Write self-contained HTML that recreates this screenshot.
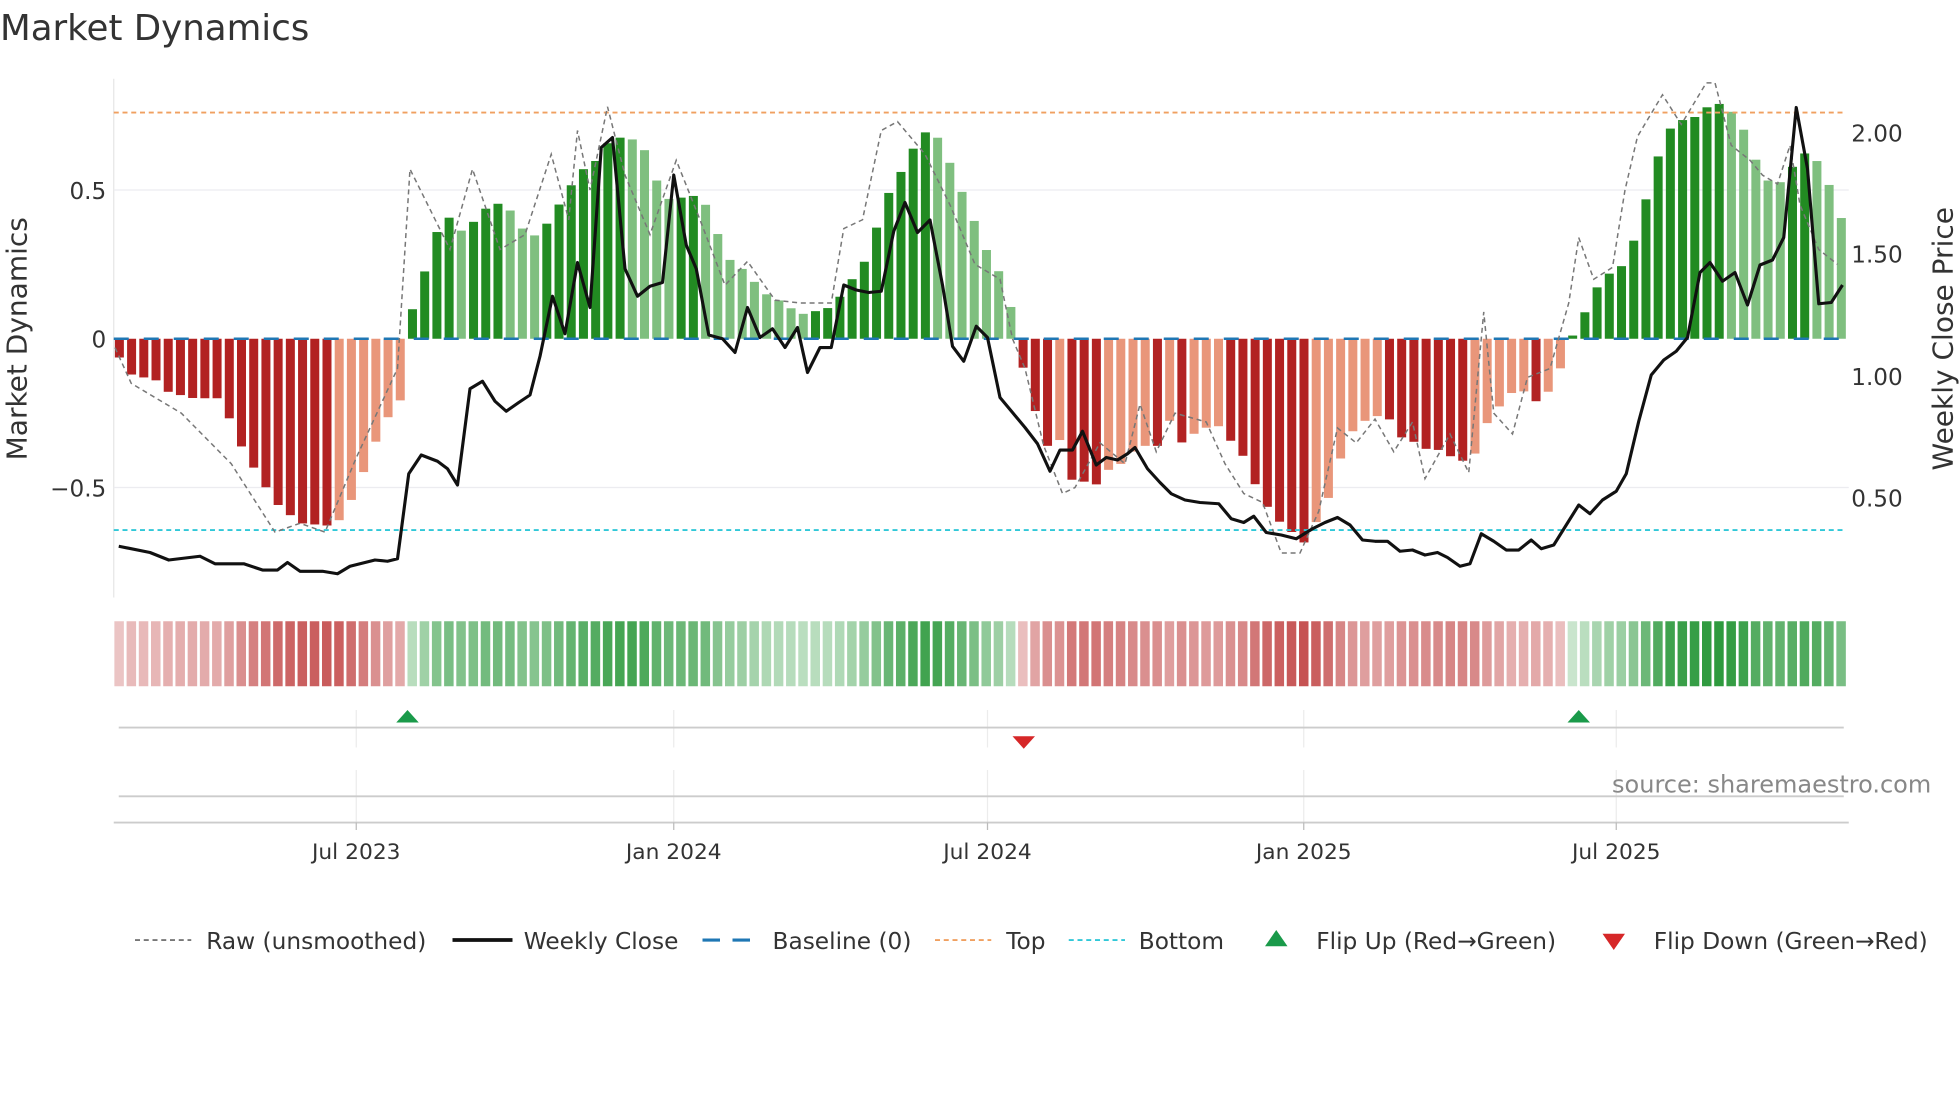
<!DOCTYPE html>
<html><head><meta charset="utf-8">
<style>
html,body{margin:0;padding:0;background:#fff;width:1960px;height:1102px;overflow:hidden}
#w{width:1568px;height:882px;transform:scale(1.25);transform-origin:0 0;position:absolute;left:0;top:0}
svg text{font-family:"DejaVu Sans","Liberation Sans",sans-serif;fill:#333}
</style></head><body>
<div id="w">
<svg id="s" width="1568" height="882" viewBox="0 0 1568 882" xmlns="http://www.w3.org/2000/svg">
<text x="0" y="32" font-size="28.5" fill="#333">Market Dynamics</text>
<line x1="91" y1="63" x2="91" y2="478" stroke="#e6e6e6"/>
<line x1="91" y1="152" x2="1479" y2="152" stroke="#ececf0"/>
<line x1="91" y1="390" x2="1479" y2="390" stroke="#ececf0"/>
<g id="bars"></g>
<line x1="91" y1="271" x2="1479" y2="271" stroke="#1f77b4" stroke-width="2" stroke-dasharray="12,12"/>
<line x1="91" y1="90" x2="1475" y2="90" stroke="#f0a060" stroke-width="1.5" stroke-dasharray="4,3"/>
<line x1="91" y1="424" x2="1475" y2="424" stroke="#30c8d8" stroke-width="1.5" stroke-dasharray="4,3"/>
<polyline id="raw" fill="none" stroke="#777" stroke-width="1.2" stroke-dasharray="4,3"/>
<polyline id="price" fill="none" stroke="#111" stroke-width="2.5" stroke-linejoin="round"/>
<g font-size="18.5" text-anchor="end">
<text x="85" y="159">0.5</text><text x="85" y="278">0</text><text x="85" y="397">−0.5</text>
</g>
<g font-size="18.5">
<text x="1481" y="113">2.00</text><text x="1481" y="210">1.50</text><text x="1481" y="308">1.00</text><text x="1481" y="405">0.50</text>
</g>
<text transform="translate(21,271) rotate(-90)" font-size="22.4" text-anchor="middle">Market Dynamics</text>
<text transform="translate(1562,271) rotate(-90)" font-size="22.4" text-anchor="middle">Weekly Close Price</text>
<g id="strip"></g>
<g stroke="#ececec">
<line x1="285" y1="568" x2="285" y2="598"/><line x1="539" y1="568" x2="539" y2="598"/><line x1="790" y1="568" x2="790" y2="598"/><line x1="1043" y1="568" x2="1043" y2="598"/><line x1="1293" y1="568" x2="1293" y2="598"/>
<line x1="285" y1="616" x2="285" y2="658"/><line x1="539" y1="616" x2="539" y2="658"/><line x1="790" y1="616" x2="790" y2="658"/><line x1="1043" y1="616" x2="1043" y2="658"/><line x1="1293" y1="616" x2="1293" y2="658"/>
</g>
<line x1="95" y1="582" x2="1475" y2="582" stroke="#ccc" stroke-width="1.5"/>
<line x1="95" y1="637" x2="1475" y2="637" stroke="#ccc" stroke-width="1.5"/>
<line x1="91" y1="658" x2="1479" y2="658" stroke="#ccc" stroke-width="1.5"/>
<polygon points="326,568 317,578 335,578" fill="#1a9a4a"/>
<polygon points="1263,568 1254,578 1272,578" fill="#1a9a4a"/>
<polygon points="810,589 828,589 819,599" fill="#d62728"/>
<text x="1545" y="634" font-size="19.2" text-anchor="end" style="fill:#888">source: sharemaestro.com</text>
<g stroke="#bbb"><line x1="285" y1="658" x2="285" y2="664"/><line x1="539" y1="658" x2="539" y2="664"/><line x1="790" y1="658" x2="790" y2="664"/><line x1="1043" y1="658" x2="1043" y2="664"/><line x1="1293" y1="658" x2="1293" y2="664"/></g>
<g font-size="17.4" text-anchor="middle">
<text x="285" y="687">Jul 2023</text><text x="539" y="687">Jan 2024</text><text x="790" y="687">Jul 2024</text><text x="1043" y="687">Jan 2025</text><text x="1293" y="687">Jul 2025</text>
</g>
<g font-size="18.6">
<line x1="108" y1="752" x2="153" y2="752" stroke="#777" stroke-width="1.5" stroke-dasharray="4,3"/>
<text x="165" y="759">Raw (unsmoothed)</text>
<line x1="362" y1="752" x2="410" y2="752" stroke="#111" stroke-width="3"/>
<text x="419" y="759">Weekly Close</text>
<line x1="562" y1="752" x2="607" y2="752" stroke="#1f77b4" stroke-width="2.5" stroke-dasharray="14,10"/>
<text x="618" y="759">Baseline (0)</text>
<line x1="748" y1="752" x2="793" y2="752" stroke="#f0a060" stroke-width="1.5" stroke-dasharray="4,3"/>
<text x="805" y="759">Top</text>
<line x1="855" y1="752" x2="900" y2="752" stroke="#30c8d8" stroke-width="1.5" stroke-dasharray="4,3"/>
<text x="911" y="759">Bottom</text>
<polygon points="1021,744 1012,757 1030,757" fill="#1a9a4a"/>
<text x="1053" y="759">Flip Up (Red→Green)</text>
<polygon points="1282,747 1300,747 1291,760" fill="#d62728"/>
<text x="1323" y="759">Flip Down (Green→Red)</text>
</g>
</svg>
</div>
<script>
var NS="http://www.w3.org/2000/svg";
var K=[[95,-0.06],[105,-0.12],[125,-0.14],[135,-0.18],[155,-0.2],[175,-0.2],[185,-0.28],[195,-0.38],[210,-0.48],[220,-0.55],[240,-0.62],[268,-0.63],[278,-0.57],[288,-0.48],[298,-0.37],[308,-0.28],[317,-0.22],[322,-0.2],[330,0.1],[336,0.17],[346,0.32],[356,0.43],[366,0.36],[375,0.37],[385,0.43],[395,0.45],[404,0.46],[414,0.39],[424,0.34],[434,0.36],[443,0.43],[453,0.48],[463,0.57],[473,0.57],[482,0.64],[492,0.68],[502,0.67],[512,0.67],[521,0.58],[531,0.47],[541,0.47],[550,0.48],[560,0.48],[569,0.42],[579,0.29],[589,0.24],[598,0.23],[608,0.16],[618,0.14],[627,0.12],[637,0.09],[646,0.08],[656,0.10],[666,0.105],[675,0.16],[685,0.22],[695,0.28],[705,0.43],[714,0.52],[724,0.58],[734,0.67],[742,0.70],[752,0.67],[762,0.57],[772,0.47],[781,0.38],[791,0.28],[800,0.22],[810,0.09],[814,0.02],[818,-0.09],[828,-0.24],[838,-0.36],[848,-0.34],[858,-0.48],[867,-0.48],[877,-0.49],[887,-0.44],[897,-0.42],[906,-0.38],[916,-0.36],[926,-0.36],[935,-0.27],[945,-0.35],[955,-0.32],[964,-0.3],[974,-0.29],[984,-0.34],[994,-0.39],[1003,-0.48],[1013,-0.56],[1022,-0.61],[1032,-0.64],[1041,-0.70],[1051,-0.63],[1061,-0.56],[1070,-0.43],[1080,-0.32],[1090,-0.28],[1100,-0.26],[1110,-0.26],[1120,-0.33],[1129,-0.34],[1139,-0.37],[1149,-0.37],[1158,-0.39],[1168,-0.41],[1178,-0.41],[1187,-0.30],[1197,-0.24],[1207,-0.19],[1216,-0.16],[1225,-0.21],[1235,-0.21],[1244,-0.13],[1254,-0.06],[1258,0.01],[1263,0.04],[1273,0.14],[1283,0.21],[1293,0.23],[1302,0.26],[1312,0.40],[1321,0.53],[1331,0.68],[1341,0.73],[1351,0.74],[1360,0.75],[1370,0.80],[1380,0.78],[1389,0.75],[1399,0.67],[1409,0.55],[1418,0.52],[1428,0.53],[1438,0.61],[1447,0.63],[1457,0.58],[1467,0.48],[1476,0.37]];
function interp(k,x){if(x<=k[0][0])return k[0][1];for(var i=1;i<k.length;i++){if(x<=k[i][0]){var a=k[i-1],b=k[i];return a[1]+(b[1]-a[1])*(x-a[0])/(b[0]-a[0]);}}return k[k.length-1][1];}
var bars=document.getElementById("bars"),strip=document.getElementById("strip");
var step=9.77,prev=0;
for(var i=0;i<142;i++){
 var cx=95.5+i*step; if(cx>1478)break;
 var v=interp(K,cx);
 var dark=Math.abs(v)>=Math.abs(prev)-0.002 && (v*prev>=0);
 if(v*prev<0)dark=true;
 var col=v>=0?(dark?"#228b22":"#7fbf7f"):(dark?"#b22222":"#e9967a");
 var y0=271,y1=271-v*238;
 var r=document.createElementNS(NS,"rect");
 r.setAttribute("x",cx-3.6);r.setAttribute("width",7.2);
 r.setAttribute("y",Math.min(y0,y1));r.setAttribute("height",Math.abs(y1-y0));
 r.setAttribute("fill",col);bars.appendChild(r);
 var a=Math.min(1,0.25+Math.abs(v)*0.95);
 var s=document.createElementNS(NS,"rect");
 s.setAttribute("x",cx-4);s.setAttribute("width",7.6);s.setAttribute("y",497);s.setAttribute("height",52);
 s.setAttribute("fill",v>=0?"#2e9a3e":"#c04040");s.setAttribute("fill-opacity",a.toFixed(2));
 strip.appendChild(s);
 prev=v;
}
var R=[[92,-0.03],[105,-0.15],[145,-0.25],[185,-0.42],[220,-0.65],[240,-0.62],[260,-0.65],[285,-0.4],[318,-0.1],[328,0.57],[360,0.3],[378,0.57],[400,0.3],[420,0.35],[441,0.62],[455,0.4],[462,0.7],[472,0.5],[486,0.78],[500,0.55],[520,0.35],[541,0.6],[560,0.4],[580,0.18],[598,0.26],[620,0.13],[640,0.12],[665,0.12],[675,0.37],[690,0.4],[705,0.7],[718,0.73],[740,0.62],[760,0.45],[780,0.25],[800,0.2],[810,0.0],[820,-0.1],[835,-0.36],[850,-0.52],[860,-0.5],[880,-0.35],[900,-0.42],[912,-0.22],[925,-0.38],[940,-0.25],[965,-0.28],[980,-0.42],[995,-0.52],[1010,-0.55],[1025,-0.72],[1040,-0.72],[1055,-0.58],[1070,-0.3],[1085,-0.35],[1100,-0.27],[1115,-0.38],[1130,-0.28],[1140,-0.47],[1160,-0.32],[1175,-0.45],[1187,0.09],[1195,-0.25],[1210,-0.32],[1222,-0.13],[1240,-0.1],[1255,0.12],[1263,0.34],[1275,0.2],[1290,0.24],[1300,0.5],[1310,0.68],[1330,0.82],[1345,0.72],[1365,0.86],[1372,0.86],[1385,0.65],[1400,0.6],[1410,0.55],[1422,0.52],[1432,0.65],[1440,0.45],[1455,0.3],[1470,0.25]];
document.getElementById("raw").setAttribute("points",R.map(function(p){return p[0]+","+(271-p[1]*238).toFixed(1)}).join(" "));
var P=[[95,437],[120,442],[135,448],[160,445],[172,451],[195,451],[210,456],[222,456],[230,450],[240,457],[258,457],[270,459],[280,453],[300,448],[310,449],[318,447],[327,379],[337,364],[350,369],[358,375],[366,388],[376,311],[386,305],[396,321],[405,329],[415,322],[424,316],[432,285],[442,237],[452,267],[462,210],[472,246],[481,118],[490,110],[500,215],[510,237],[520,229],[530,226],[539,140],[549,196],[557,215],[567,268],[578,271],[588,282],[598,246],[608,270],[618,263],[628,278],[638,262],[646,298],[656,278],[665,278],[675,228],[685,232],[695,234],[705,233],[715,185],[724,162],[734,186],[744,176],[754,228],[762,277],[771,289],[781,261],[790,270],[800,318],[810,330],[820,342],[830,355],[840,377],[848,360],[858,360],[866,345],[877,372],[885,366],[894,368],[902,363],[908,358],[918,375],[928,386],[937,395],[948,400],[960,402],[975,403],[985,415],[995,418],[1003,413],[1013,426],[1025,428],[1037,431],[1050,423],[1060,418],[1070,414],[1080,420],[1090,432],[1100,433],[1110,433],[1120,441],[1130,440],[1140,444],[1150,442],[1158,446],[1168,453],[1176,451],[1185,427],[1195,433],[1205,440],[1215,440],[1225,432],[1233,439],[1243,436],[1253,420],[1263,404],[1272,411],[1282,400],[1293,393],[1301,379],[1311,337],[1321,300],[1331,288],[1341,281],[1350,270],[1360,218],[1368,210],[1378,225],[1388,218],[1398,244],[1408,212],[1418,208],[1427,190],[1437,86],[1446,135],[1455,243],[1465,242],[1474,228]];
document.getElementById("price").setAttribute("points",P.map(function(p){return p[0]+","+p[1]}).join(" "));
</script>
</body></html>
